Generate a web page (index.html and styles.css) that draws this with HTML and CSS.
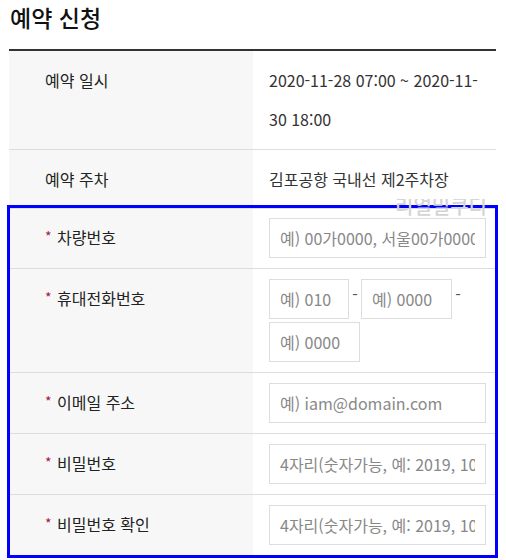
FILE: index.html
```html
<!DOCTYPE html>
<html lang="ko">
<head>
    <meta charset="UTF-8">
    <meta name="viewport" content="width=device-width, initial-scale=1.0">
    <title>예약 신청</title>
    <link rel="stylesheet" href="styles.css">
</head>
<body>
    <div class="wrap">
        <h2 class="page-title">예약 신청</h2>

        <table class="form-table">
            <colgroup>
                <col class="col-label">
                <col>
            </colgroup>
            <tr>
                <th>예약 일시</th>
                <td>2020-11-28 07:00 ~ 2020-11-30 18:00</td>
            </tr>
            <tr>
                <th>예약 주차</th>
                <td>김포공항 국내선 제2주차장</td>
            </tr>
        </table>

        <div class="form-box">
            <span class="watermark"><span>리얼밀쿠디</span></span>
            <table class="form-table">
                <colgroup>
                    <col class="col-label">
                    <col>
                </colgroup>
                <tr>
                    <th><span class="req">*</span>차량번호</th>
                    <td><input type="text" class="text-input" placeholder="예) 00가0000, 서울00가0000"></td>
                </tr>
                <tr>
                    <th><span class="req">*</span>휴대전화번호</th>
                    <td>
                        <div class="phone-group">
                            <input type="text" class="text-input phone-first" placeholder="예) 010">
                            <span class="dash">-</span>
                            <input type="text" class="text-input phone-part" placeholder="예) 0000">
                            <span class="dash">-</span>
                            <input type="text" class="text-input phone-part" placeholder="예) 0000">
                        </div>
                    </td>
                </tr>
                <tr>
                    <th><span class="req">*</span>이메일 주소</th>
                    <td><input type="text" class="text-input" placeholder="예) iam@domain.com"></td>
                </tr>
                <tr>
                    <th><span class="req">*</span>비밀번호</th>
                    <td><input type="password" class="text-input" placeholder="4자리(숫자가능, 예: 2019, 1004)"></td>
                </tr>
                <tr>
                    <th><span class="req">*</span>비밀번호 확인</th>
                    <td><input type="password" class="text-input" placeholder="4자리(숫자가능, 예: 2019, 1004)"></td>
                </tr>
            </table>
        </div>
    </div>
</body>
</html>
```

FILE: styles.css
```css
body {
    margin: 0;
    padding: 0;
    background-color: #fff;
    font-family: "Noto Sans CJK KR", "Noto Sans", sans-serif;
    color: #222;
}

.wrap {
    padding: 0 10px 0 9px;
}

.page-title {
    margin: 0;
    padding: 0 0 15px 1px;
    font-size: 23px;
    line-height: 34px;
    font-weight: 500;
    color: #111;
}

.form-table {
    width: 100%;
    border-collapse: collapse;
    table-layout: fixed;
    font-size: 16px;
    line-height: 39px;
}

.wrap > .form-table {
    border-top: 2px solid #333;
}

.col-label {
    width: 244px;
}

.form-table th,
.form-table td {
    padding: 10px 10px 10px 16px;
    border-bottom: 1px solid #ddd;
    vertical-align: top;
    text-align: left;
}

.form-table th {
    padding-left: 36px;
    background-color: #f7f7f7;
    font-weight: normal;
    color: #222;
}

.form-table td {
    color: #333;
}

.form-table tr:last-child th,
.form-table tr:last-child td {
    border-bottom: none;
}

.req {
    display: inline-block;
    width: 12px;
    color: #a3164b;
    font-size: 14px;
    line-height: 36px;
    vertical-align: top;
}

/* highlighted block of required fields */
.form-box {
    position: relative;
    margin: -4px -2px 0 -2px;
    border: 3px solid #0000ff;
}

.form-box .col-label {
    width: 243px;
}

.form-box .form-table th {
    padding-left: 35px;
}

.form-box .form-table td {
    padding-right: 9px;
}

.form-box .form-table tr:first-child th,
.form-box .form-table tr:first-child td {
    border-top: 1px solid #ddd;
    padding-top: 9px;
}

.watermark {
    position: absolute;
    top: -9px;
    right: 8px;
    height: 17px;
    overflow: hidden;
    color: #d4d4d4;
    font-size: 20px;
    font-weight: 500;
}

.watermark span {
    display: block;
    margin-top: -3px;
    line-height: 20px;
}

.text-input {
    display: block;
    box-sizing: border-box;
    width: 100%;
    height: 40px;
    padding: 0 10px;
    border: 1px solid #ddd;
    font-family: inherit;
    font-size: 16px;
    color: #333;
    background-color: #fff;
}

.text-input::placeholder {
    color: #888;
}

.phone-group {
    display: flex;
    flex-wrap: wrap;
    align-items: flex-start;
    row-gap: 3px;
}

.phone-first {
    width: 80px;
}

.phone-part {
    width: 91px;
}

.dash {
    width: 12px;
    text-align: center;
    line-height: 30px;
    color: #555;
}
```
